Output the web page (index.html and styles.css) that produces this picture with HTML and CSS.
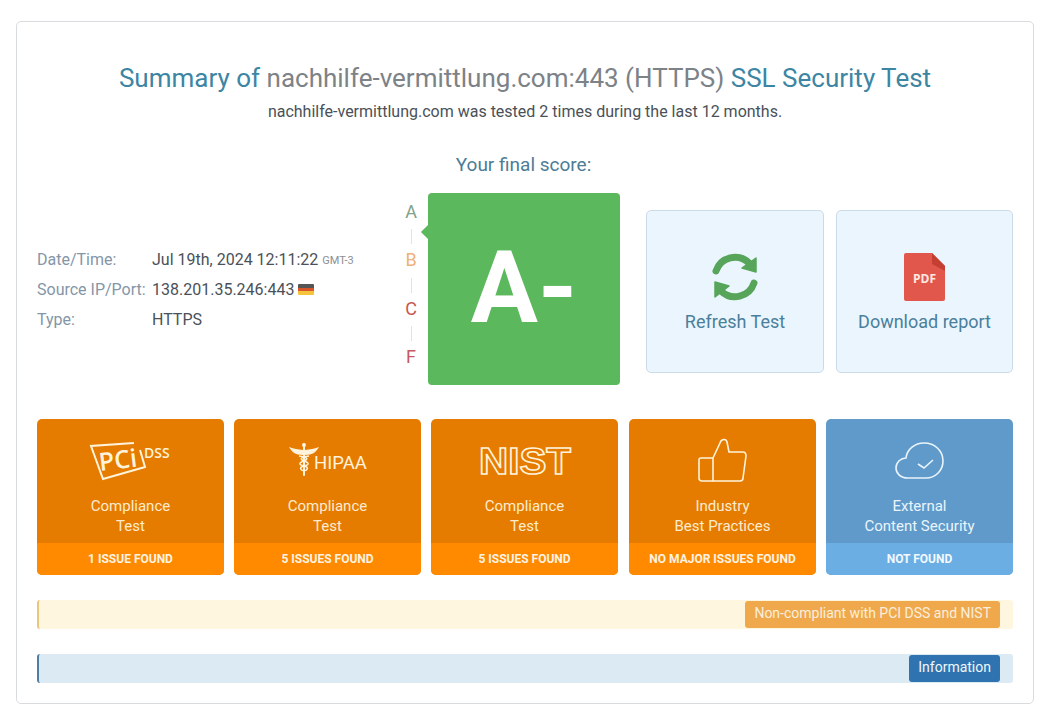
FILE: index.html
```html
<!DOCTYPE html>
<html lang="en">
<head>
<meta charset="utf-8">
<title>SSL Security Test Summary</title>
<link rel="stylesheet" href="styles.css">
</head>
<body>
<main class="card">
  <h1 class="title">Summary of <span class="host">nachhilfe-vermittlung.com:443 (HTTPS)</span> SSL Security Test</h1>
  <p class="subtitle">nachhilfe-vermittlung.com was tested 2 times during the last 12 months.</p>
  <h2 class="score-label">Your final score:</h2>

  <section class="score-row">
    <dl class="info">
      <div class="info-row"><dt>Date/Time:</dt><dd>Jul 19th, 2024 12:11:22 <small>GMT-3</small></dd></div>
      <div class="info-row"><dt>Source IP/Port:</dt><dd>138.201.35.246:443 <span class="flag"></span></dd></div>
      <div class="info-row"><dt>Type:</dt><dd>HTTPS</dd></div>
    </dl>

    <ul class="scale">
      <li class="a">A</li>
      <li class="b">B</li>
      <li class="c">C</li>
      <li class="f">F</li>
    </ul>

    <div class="grade">A-</div>

    <a class="action" href="#">
      <svg class="action-icon" width="46" height="48" viewBox="0 0 46 48">
        <path d="M4 18 A20 20 0 0 1 37 10" fill="none" stroke="#57a55a" stroke-width="7" stroke-linecap="round"/>
        <path d="M44 5 V19 L30 15 Z" fill="#57a55a" stroke="#57a55a" stroke-width="1.5" stroke-linejoin="round"/>
        <path d="M42 30 A20 20 0 0 1 9 38" fill="none" stroke="#57a55a" stroke-width="7" stroke-linecap="round"/>
        <path d="M3 29 V44 L17 33 Z" fill="#57a55a" stroke="#57a55a" stroke-width="1.5" stroke-linejoin="round"/>
      </svg>
      <span>Refresh Test</span>
    </a>
    <a class="action" href="#">
      <svg class="action-icon" width="42" height="48" viewBox="0 0 42 48">
        <path d="M2 0 H28 L41 13 V46 a2 2 0 0 1 -2 2 H2 a2 2 0 0 1 -2 -2 V2 a2 2 0 0 1 2 -2 Z" fill="#e2574c"/>
        <path d="M28 0 L41 13 V18 L28 11 Z" fill="#c43f32"/>
        <text x="20.5" y="29.5" text-anchor="middle" class="pdf">PDF</text>
      </svg>
      <span>Download report</span>
    </a>
  </section>

  <section class="tiles">
    <article class="tile orange">
      <div class="tile-body">
        <svg class="logo" width="86" height="40" viewBox="0 0 86 40">
          <path d="M46 3 L3 6 L15 39 L57 27 L52 10" fill="none" stroke="#fff3dc" stroke-width="2"/>
          <text class="pci" x="12" y="31" transform="rotate(-7 12 31)">PCi</text>
          <text class="dss" x="56" y="18">DSS</text>
        </svg>
        <p>Compliance<br>Test</p>
      </div>
      <div class="tile-foot">1 ISSUE FOUND</div>
    </article>
    <article class="tile orange">
      <div class="tile-body">
        <svg class="logo" width="78" height="40" viewBox="0 0 78 40">
          <path d="M15 4 V35" stroke="#fff3dc" stroke-width="2" stroke-linecap="round"/>
          <path d="M14 10 C9 9 5 9 0 7 C3 12 6 15 14 15 Z M16 10 C21 9 25 9 30 7 C27 12 24 15 16 15 Z" fill="#fff3dc"/>
          <path d="M10 16 C18 17 20 19 15 21 C9 23 10 25 15 26 C20 27 19 30 15 31" fill="none" stroke="#fff3dc" stroke-width="1.5"/>
          <path d="M20 16 C12 17 10 19 15 21 C21 23 20 25 15 26 C10 27 11 30 15 31" fill="none" stroke="#fff3dc" stroke-width="1.5"/>
          <circle cx="15" cy="5" r="2" fill="#fff3dc"/>
          <text class="hipaa" x="25" y="29">HIPAA</text>
        </svg>
        <p>Compliance<br>Test</p>
      </div>
      <div class="tile-foot">5 ISSUES FOUND</div>
    </article>
    <article class="tile orange">
      <div class="tile-body">
        <svg class="logo" width="94" height="40" viewBox="0 0 94 40">
          <text class="nist" x="1" y="34" textLength="92" lengthAdjust="spacingAndGlyphs">NIST</text>
        </svg>
        <p>Compliance<br>Test</p>
      </div>
      <div class="tile-foot">5 ISSUES FOUND</div>
    </article>
    <article class="tile orange">
      <div class="tile-body">
        <svg class="logo" width="50" height="44" viewBox="0 0 50 44">
          <path d="M1 22 a2 2 0 0 1 2 -2 H15 V43 H4 a3 3 0 0 1 -3 -3 Z" fill="none" stroke="#fff3dc" stroke-width="1.6"/>
          <path d="M15 20 L22 5 C23 1 28 0 29 4 L31 14 H45 C47 14 48 16 48 18 L45 40 C45 42 44 43 42 43 H15" fill="none" stroke="#fff3dc" stroke-width="1.6" stroke-linejoin="round"/>
        </svg>
        <p>Industry<br>Best Practices</p>
      </div>
      <div class="tile-foot">NO MAJOR ISSUES FOUND</div>
    </article>
    <article class="tile blue">
      <div class="tile-body">
        <svg class="logo" width="50" height="40" viewBox="0 0 50 40">
          <path d="M13 38 C5 38 1 33 1 28 C1 22 6 18 11 18 C12 9 20 3 29 3 C40 3 48 11 48 21 C48 31 40 38 31 38 Z" fill="none" stroke="#eaf4fc" stroke-width="1.6"/>
          <path d="M23 24 L29 28 L38 20" fill="none" stroke="#eaf4fc" stroke-width="1.6"/>
        </svg>
        <p>External<br>Content Security</p>
      </div>
      <div class="tile-foot">NOT FOUND</div>
    </article>
  </section>

  <div class="alert warn"><span class="tag">Non-compliant with PCI DSS and NIST</span></div>
  <div class="alert note"><span class="tag">Information</span></div>
</main>
</body>
</html>
```

FILE: styles.css
```css
* { box-sizing: border-box; }
html, body { margin: 0; padding: 0; background: #fff; }
body {
  font-family: Roboto, "Liberation Sans", sans-serif;
  font-size: 16px;
  color: #3c4650;
  width: 1051px;
  height: 723px;
  overflow: hidden;
  padding: 21px 17px 19px 16px;
}
.card {
  height: 683px;
  border: 1px solid #d9dcdf;
  border-radius: 5px;
  padding: 38px 20px 20px;
  display: flex;
  flex-direction: column;
}
.title {
  margin: 0;
  font-size: 26px;
  font-weight: 400;
  line-height: 36px;
  text-align: center;
  color: #3c85a3;
}
.host { color: #7d8287; }
.subtitle {
  margin: 6px 0 0;
  font-size: 16px;
  line-height: 19px;
  text-align: center;
  color: #4a5158;
}
.score-label {
  margin: 32px 0 0;
  font-size: 19px;
  font-weight: 400;
  line-height: 24px;
  text-align: center;
  color: #4d7c96;
  padding-right: 3px;
}
.score-row {
  display: flex;
  align-items: center;
  margin-top: 16px;
  height: 192px;
}
.info { margin: 0; width: 350px; }
.info-row { display: flex; height: 30px; align-items: center; }
.info dt { width: 115px; color: #8496a8; }
.info dd { margin: 0; color: #4a5158; display: flex; align-items: center; gap: 4px; white-space: nowrap; }
.info small { font-size: 11px; color: #8c8f93; margin-top: 2px; }
.flag {
  display: inline-block;
  width: 16px;
  height: 11px;
  border-radius: 1px;
  background: linear-gradient(#555 0 33%, #d8552a 33% 66%, #f5c33c 66%);
}
.scale {
  list-style: none;
  margin: 0;
  width: 41px;
  height: 192px;
  font-size: 18px;
  line-height: 22px;
  display: flex;
  flex-direction: column;
  justify-content: space-between;
  align-items: center;
  padding: 8px 0 17px 7px;
}
.scale li { position: relative; }
.scale li + li::before {
  content: "";
  position: absolute;
  left: 50%;
  top: -20px;
  height: 15px;
  border-left: 1px solid #e0e2e5;
}
.a { color: #7fa288; }
.b { color: #efb07a; }
.c { color: #c8584e; }
.f { color: #c8585f; }
.grade {
  position: relative;
  width: 192px;
  height: 192px;
  background: #5cb85c;
  border-radius: 4px;
  color: #fff;
  font-size: 100px;
  font-weight: 700;
  line-height: 189px;
  text-align: center;
  margin-right: 26px;
}
.grade::before {
  content: "";
  position: absolute;
  left: -5px;
  top: 34px;
  width: 10px;
  height: 10px;
  background: #5cb85c;
  transform: rotate(45deg);
}
.action {
  align-self: flex-start;
  width: 178px;
  height: 163px;
  margin: 17px 12px 0 0;
  background: #eaf5fd;
  border: 1px solid #ccdbe8;
  border-radius: 5px;
  color: #4a7f9c;
  font-size: 18px;
  line-height: 22px;
  text-decoration: none;
  display: flex;
  flex-direction: column;
  align-items: center;
  padding-top: 42px;
  gap: 10px;
}
.action:last-child { margin-right: 0; width: 177px; }
.action-icon { display: block; }
.pdf { font: 700 12px "Open Sans", sans-serif; fill: #fde9e0; }
.tiles {
  display: flex;
  gap: 10px;
  margin-top: 34px;
}
.tile {
  width: 187px;
  height: 156px;
  border-radius: 5px;
  overflow: hidden;
  display: flex;
  flex-direction: column;
  text-align: center;
}
.tile:nth-child(4) { margin-left: 1px; }
.tile.orange { background: #e57c00; color: #fdebcf; }
.tile.blue { background: #5f9aca; color: #eaf4fc; }
.tile-body {
  flex: 1;
  display: flex;
  flex-direction: column;
  align-items: center;
  position: relative;
  padding-top: 19px;
}
.logo { display: block; height: 44px; overflow: visible; }
.tile-body p {
  position: absolute;
  left: 0;
  right: 0;
  top: 77px;
  margin: 0;
  font-size: 15px;
  line-height: 20px;
}
.tile-foot {
  height: 32px;
  font-size: 12px;
  font-weight: 700;
  line-height: 32px;
  color: #fdf3e3;
}
.orange .tile-foot { background: #ff8a00; }
.blue .tile-foot { background: #6aaee3; color: #f3f9fe; }
.pci { font: 600 25px "Open Sans", sans-serif; fill: #fff3dc; }
.dss { font: 600 14px "Open Sans", sans-serif; fill: #fff3dc; }
.hipaa { font: 400 18.5px Roboto, sans-serif; fill: #fff3dc; }
.nist { font: 700 36px "Liberation Sans", sans-serif; fill: none; stroke: #fff3dc; stroke-width: 1.5; }
.alert {
  display: flex;
  justify-content: flex-end;
  align-items: center;
  height: 29px;
  padding-right: 13px;
  border-left: 2px solid;
  border-radius: 3px;
}
.alert.warn { margin-top: 25px; background: #fff6e0; border-color: #e8c77d; }
.alert.note { margin-top: 25px; background: #dcebf3; border-color: #4c7fa3; }
.tag {
  height: 27px;
  padding: 0 9px;
  border-radius: 3px;
  font-size: 14px;
  line-height: 25px;
  color: #fbeedc;
}
.warn .tag { background: #efa94c; }
.note .tag { background: #2f74b0; color: #f2f7fb; }
```
